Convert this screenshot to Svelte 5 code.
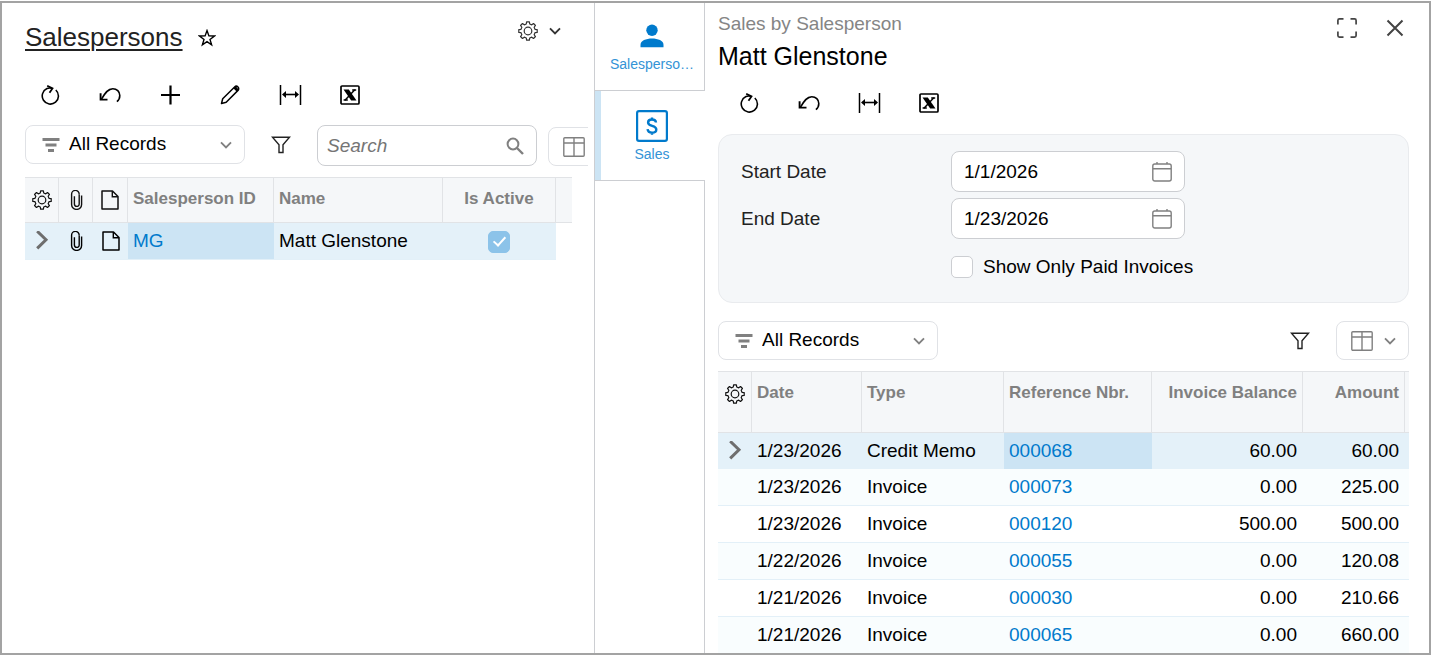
<!--
    Salespersons inquiry: record list on the left, a strip of side-panel tabs,
    and the Sales by Salesperson panel on the right.
-->
<script>
    let view = $state('All Records');
    let salesView = $state('All Records');
    let search = $state('');
    let startDate = $state('1/1/2026');
    let endDate = $state('1/23/2026');
    let onlyPaid = $state(false);
    let selected = $state(0);

    const sales = [
        { date: '1/23/2026', type: 'Credit Memo', ref: '000068', balance: '60.00', amount: '60.00' },
        { date: '1/23/2026', type: 'Invoice', ref: '000073', balance: '0.00', amount: '225.00' },
        { date: '1/23/2026', type: 'Invoice', ref: '000120', balance: '500.00', amount: '500.00' },
        { date: '1/22/2026', type: 'Invoice', ref: '000055', balance: '0.00', amount: '120.08' },
        { date: '1/21/2026', type: 'Invoice', ref: '000030', balance: '0.00', amount: '210.66' },
        { date: '1/21/2026', type: 'Invoice', ref: '000065', balance: '0.00', amount: '660.00' },
    ];

    // eight-tooth gear outline around (10, 10)
    function gearPath() {
        const pts = [];
        for (let i = 0; i < 8; i++) {
            const a = (i * Math.PI) / 4;
            for (const [r, d] of [[7.2, -0.24], [9.3, -0.15], [9.3, 0.15], [7.2, 0.24]]) {
                pts.push(`${(10 + r * Math.sin(a + d)).toFixed(2)} ${(10 - r * Math.cos(a + d)).toFixed(2)}`);
            }
        }
        return `M${pts.join('L')}Z`;
    }
    const gearOutline = gearPath();
</script>

{#snippet gear()}
    <svg class="icon" width="20" height="20" viewBox="0 0 20 20">
        <path d={gearOutline} stroke-width="1.2" stroke-linejoin="round" />
        <circle cx="10" cy="10" r="3.8" stroke-width="1.2" />
    </svg>
{/snippet}

{#snippet refresh()}
    <svg class="icon" width="20" height="20" viewBox="0 0 20 20">
        <path d="M15.8 5A8.1 8.1 0 1 1 7 3.600Q9 2.700 12 3.300" stroke-width="1.6" />
        <path d="M7.2.8 12.500 3.400 9.500 7.800" stroke-width="1.8" />
    </svg>
{/snippet}

{#snippet undo()}
    <svg class="icon" width="22" height="22" viewBox="0 0 22 22">
        <path d="M2.5 15.2C6 9 9 4.7 13.8 4.7c4 0 7 3 7 6.8 0 2.5-1 4.7-2.9 6.2" stroke-width="1.6" />
        <path d="M1.6 9.2v6.400h6.900" stroke-width="1.9" />
    </svg>
{/snippet}

{#snippet fit()}
    <svg class="icon" width="24" height="20" viewBox="0 0 24 20">
        <path d="M2.500 0v20M22.500 0v20" stroke-width="1.5" />
        <path d="M6 9.500h13" stroke-width="1.6" />
        <path class="solid" d="M4 9.500 8 6v7zM21 9.500 17 6v7z" />
    </svg>
{/snippet}

{#snippet excel()}
    <svg class="icon" width="20" height="20" viewBox="0 0 20 20">
        <rect x="1" y="1" width="18" height="18" rx="1" stroke-width="1.7" />
        <path class="solid" d="M3.500 4.500h5.300l7.700 11h-5.300z" />
        <path d="M14.800 4.800 5 15.200" stroke-width="1.5" />
        <path d="M12.200 4.900h4M3.600 15.100h4.200" stroke-width="1.5" />
    </svg>
{/snippet}

{#snippet funnel()}
    <svg class="icon" width="20" height="20" viewBox="0 0 20 20">
        <path d="M1.500 2.200h17L12 9.800v7.700H8V9.800z" stroke-width="1.4" />
    </svg>
{/snippet}

{#snippet lines()}
    <svg class="icon muted" width="18" height="16" viewBox="0 0 18 16">
        <path d="M.5 2.500h17M3.500 8h11M6 13.500h6" stroke-width="2.8" />
    </svg>
{/snippet}

{#snippet chevron()}
    <svg class="icon" width="12" height="8" viewBox="0 0 12 8">
        <path d="M1 1.300l5 5 5-5" stroke-width="1.9" />
    </svg>
{/snippet}

{#snippet columns()}
    <svg class="icon muted" width="22" height="20" viewBox="0 0 22 20">
        <rect x=".8" y=".8" width="20.4" height="18.4" rx="1" stroke-width="1.4" />
        <path d="M1 6h20M11 1v18" stroke-width="1.4" />
    </svg>
{/snippet}

{#snippet clip()}
    <svg class="icon" width="14" height="20" viewBox="0 0 14 20">
        <path d="M10.200 4.600v-.4a3.800 3.800 0 0 0-7.600 0v10.200a5 5 0 0 0 10 0V5.500" stroke-width="1.4" />
        <path d="M10.200 4.500v9.500a2.400 2.400 0 0 1-4.800 0V6.200" stroke-width="1.4" />
    </svg>
{/snippet}

{#snippet page()}
    <svg class="icon" width="18" height="20" viewBox="0 0 18 20">
        <path d="M1 1h10.500L17 6.500V19H1z" stroke-width="1.5" stroke-linejoin="round" />
        <path d="M11.300 1v5.700H17" stroke-width="1.4" />
    </svg>
{/snippet}

{#snippet pointer()}
    <svg class="icon pointer" width="14" height="20" viewBox="0 0 14 20">
        <path d="M2.200.200l8.800 8.600-8.800 8.600" stroke-width="3" />
    </svg>
{/snippet}

{#snippet calendar()}
    <svg class="icon muted" width="20" height="20" viewBox="0 0 20 20">
        <rect x=".8" y="2" width="18.4" height="17" rx="2" stroke-width="1.4" />
        <path d="M1 6.800h18M5 0v2M15 0v2" stroke-width="1.4" />
    </svg>
{/snippet}

<div class="frame">
    <section class="list-pane">
        <header class="list-head">
            <a class="title" href="#salespersons">Salespersons</a>
            <button class="plain star" type="button" aria-label="Add to favorites">
                <svg class="icon" width="18" height="18" viewBox="0 0 18 18">
                    <path d="M9 1.600l1.900 5.300 5.600.1-4.500 3.400 1.600 5.500L9 12.700l-4.600 3.200L6 10.400 1.500 7l5.600-.1z" stroke-width="1.4" />
                </svg>
            </button>
            <button class="plain settings" type="button" aria-label="Screen settings">
                {@render gear()}
                {@render chevron()}
            </button>
        </header>

        <div class="toolbar">
            <button class="tool" type="button" aria-label="Refresh">{@render refresh()}</button>
            <button class="tool" type="button" aria-label="Undo">{@render undo()}</button>
            <button class="tool" type="button" aria-label="Add">
                <svg class="icon" width="20" height="20" viewBox="0 0 20 20">
                    <path d="M10.500.500v19M1 10h19" stroke-width="2.2" />
                </svg>
            </button>
            <button class="tool" type="button" aria-label="Edit">
                <svg class="icon" width="20" height="20" viewBox="0 0 20 20">
                    <path d="M1.500 18.500l1.200-4.700L14.600 2a2.300 2.300 0 0 1 3.400 3.400L6.200 17.300z" stroke-width="1.5" stroke-linejoin="round" />
                    <path class="solid" d="M13.300 3.200l3.500 3.500 1.900-2.300-2.900-3.200z" />
                </svg>
            </button>
            <button class="tool" type="button" aria-label="Fit to screen">{@render fit()}</button>
            <button class="tool" type="button" aria-label="Export to Excel">{@render excel()}</button>
        </div>

        <div class="filters clipped">
            <label class="combo">
                {@render lines()}
                <select bind:value={view} aria-label="Filter">
                    <option>All Records</option>
                </select>
                {@render chevron()}
            </label>
            <button class="plain funnel" type="button" aria-label="Filter settings">{@render funnel()}</button>
            <label class="field search">
                <input type="text" placeholder="Search" aria-label="Search" bind:value={search} />
                <svg class="icon muted" width="18" height="18" viewBox="0 0 18 18">
                    <circle cx="7" cy="7" r="5.4" stroke-width="2" />
                    <path d="M11 11l6 6" stroke-width="2.4" />
                </svg>
            </label>
            <button class="columns" type="button" aria-label="Column view">
                {@render columns()}
                {@render chevron()}
            </button>
        </div>

        <table class="grid people">
            <colgroup>
                <col class="w-tool" />
                <col class="w-tool" />
                <col class="w-note" />
                <col class="w-id" />
                <col class="w-name" />
                <col class="w-active" />
                <col class="w-rest" />
            </colgroup>
            <thead>
                <tr>
                    <th class="mark">{@render gear()}</th>
                    <th class="mark">{@render clip()}</th>
                    <th class="mark">{@render page()}</th>
                    <th>Salesperson ID</th>
                    <th>Name</th>
                    <th class="center">Is Active</th>
                    <th class="rest"></th>
                </tr>
            </thead>
            <tbody>
                <tr class="current">
                    <td class="mark">{@render pointer()}</td>
                    <td class="mark">{@render clip()}</td>
                    <td class="mark">{@render page()}</td>
                    <td class="key"><a href="#MG">MG</a></td>
                    <td>Matt Glenstone</td>
                    <td class="center"><input type="checkbox" aria-label="Is Active" checked disabled /></td>
                    <td class="rest"></td>
                </tr>
            </tbody>
        </table>
    </section>

    <nav class="tabs">
        <button class="tab" type="button">
            <svg width="32" height="32" viewBox="0 0 32 32">
                <circle cx="16" cy="10.3" r="5.700" />
                <path d="M4.500 27.300v-2.400c0-4.100 5.500-6.300 11.500-6.300s11.500 2.200 11.500 6.300v2.400z" />
            </svg>
            <span>Salesperso…</span>
        </button>
        <button class="tab active" type="button">
            <svg width="32" height="32" viewBox="0 0 32 32">
                <path d="M3 0h26a3 3 0 0 1 3 3v26a3 3 0 0 1-3 3H3a3 3 0 0 1-3-3V3a3 3 0 0 1 3-3zM2.200 3v26q0 .8.8.8h26q.8 0 .8-.8V3q0-.8-.8-.8H3q-.8 0-.8.800z" fill-rule="evenodd" />
                <path class="dollar" d="M20 12.500c-.2-2-1.700-3-4-3s-3.900 1.100-3.900 3c0 4.600 8.200 2.300 8.200 7 0 2-1.700 3.200-4.200 3.200-2.600 0-4.300-1.200-4.500-3.500M16 7.500v2.500M16 22v2.800" />
            </svg>
            <span>Sales</span>
        </button>
        <div class="tab-rest"></div>
    </nav>

    <section class="sales-pane">
        <header class="sales-head">
            <div class="names">
                <p>Sales by Salesperson</p>
                <h2>Matt Glenstone</h2>
            </div>
            <button class="plain window" type="button" aria-label="Expand">
                <svg class="icon" width="20" height="20" viewBox="0 0 20 20">
                    <path d="M.9 6.500V2.400Q.9.900 2.400.9h4.100M13.500.9h4.100q1.500 0 1.500 1.500v4.100M19.100 13.500v4.100q0 1.500-1.500 1.500h-4.100M6.500 19.100H2.400q-1.500 0-1.500-1.500v-4.100" stroke-width="1.7" />
                </svg>
            </button>
            <button class="plain window" type="button" aria-label="Close">
                <svg class="icon" width="20" height="20" viewBox="0 0 20 20">
                    <path d="M2.500 2.500l15 15M17.500 2.500l-15 15" stroke-width="2" />
                </svg>
            </button>
        </header>

        <div class="toolbar">
            <button class="tool" type="button" aria-label="Refresh">{@render refresh()}</button>
            <button class="tool" type="button" aria-label="Undo">{@render undo()}</button>
            <button class="tool" type="button" aria-label="Fit to screen">{@render fit()}</button>
            <button class="tool" type="button" aria-label="Export to Excel">{@render excel()}</button>
        </div>

        <form class="params">
            <label for="start-date">Start Date</label>
            <div class="field">
                <input id="start-date" type="text" bind:value={startDate} />
                {@render calendar()}
            </div>
            <label for="end-date">End Date</label>
            <div class="field">
                <input id="end-date" type="text" bind:value={endDate} />
                {@render calendar()}
            </div>
            <label class="check">
                <input type="checkbox" bind:checked={onlyPaid} />
                Show Only Paid Invoices
            </label>
        </form>

        <div class="filters">
            <label class="combo">
                {@render lines()}
                <select bind:value={salesView} aria-label="Filter">
                    <option>All Records</option>
                </select>
                {@render chevron()}
            </label>
            <button class="plain funnel push" type="button" aria-label="Filter settings">{@render funnel()}</button>
            <button class="columns" type="button" aria-label="Column view">
                {@render columns()}
                {@render chevron()}
            </button>
        </div>

        <table class="grid sales">
            <colgroup>
                <col class="w-tool" />
                <col class="w-date" />
                <col class="w-type" />
                <col class="w-ref" />
                <col class="w-balance" />
                <col class="w-amount" />
                <col class="w-edge" />
            </colgroup>
            <thead>
                <tr>
                    <th class="mark">{@render gear()}</th>
                    <th>Date</th>
                    <th>Type</th>
                    <th>Reference Nbr.</th>
                    <th class="num">Invoice Balance</th>
                    <th class="num">Amount</th>
                    <th class="rest"></th>
                </tr>
            </thead>
            <tbody>
                {#each sales as row, i}
                    <tr class:current={i === selected} onclick={() => (selected = i)}>
                        <td class="mark">{#if i === selected}{@render pointer()}{/if}</td>
                        <td>{row.date}</td>
                        <td>{row.type}</td>
                        <td class="key"><a href="#{row.ref}">{row.ref}</a></td>
                        <td class="num">{row.balance}</td>
                        <td class="num">{row.amount}</td>
                        <td class="rest"></td>
                    </tr>
                {/each}
            </tbody>
        </table>
    </section>
</div>

<style>
    :global(body) {
        margin: 0;
        background: #fff;
    }

    .frame {
        --blue: #007acc;
        --line: #e1e3e6;
        --gray: #808080;

        display: grid;
        grid-template-columns: minmax(0, 592fr) 111px minmax(0, 724fr);
        box-sizing: border-box;
        height: calc(100vh - 1px);
        margin-top: 1px;
        border: 2px solid #a3a3a3;
        overflow: hidden;
        font-family: "Liberation Sans", Arial, sans-serif;
        font-size: 19px;
        line-height: 24px;
        color: #000;
    }

    button,
    input,
    select {
        box-sizing: border-box;
        margin: 0;
        font: inherit;
        color: inherit;
    }

    button {
        padding: 0;
        background: none;
        border: 0;
        cursor: pointer;
    }

    a {
        color: var(--blue);
        text-decoration: none;
    }

    .icon {
        display: block;
        flex: none;
        fill: none;
        stroke: currentColor;
    }

    .icon .solid {
        fill: currentColor;
        stroke: none;
    }

    .muted {
        color: var(--gray);
    }

    .plain {
        display: flex;
        align-items: center;
        justify-content: center;
    }

    /* Left pane */
    .list-pane {
        padding: 18px 6px 0 23px;
        overflow: hidden;
    }

    .list-head {
        display: flex;
        align-items: flex-start;
    }

    .title {
        font-size: 26px;
        line-height: 32px;
        color: #222;
        text-decoration: underline;
        text-decoration-thickness: 2px;
        text-underline-offset: 3px;
    }

    .star {
        height: 34px;
        margin-left: 15px;
    }

    .settings {
        gap: 11px;
        height: 20px;
        margin: 0 27px 0 auto;
        color: #333;
    }

    .toolbar {
        display: flex;
        gap: 20px;
        margin: 20px 0 0 5px;
    }

    .tool {
        display: flex;
        align-items: center;
        justify-content: center;
        width: 40px;
        height: 40px;
    }

    .filters {
        display: flex;
        align-items: flex-start;
        margin: 10px 0 11px;
    }

    .clipped {
        overflow: hidden;
    }

    .combo,
    .columns {
        display: flex;
        flex: none;
        align-items: center;
        box-sizing: border-box;
        height: 39px;
        background: #fff;
        border: 1px solid #e0e2e6;
        border-radius: 8px;
    }

    .combo {
        gap: 9px;
        width: 220px;
        padding: 0 12px 0 16px;
        color: var(--gray);
    }

    .combo select {
        flex: 1;
        min-width: 0;
        height: 37px;
        padding: 0 0 2px;
        color: #000;
        appearance: none;
        background: none;
        border: 0;
    }

    .columns {
        gap: 11px;
        width: 73px;
        padding: 0 12px 0 14px;
        color: var(--gray);
    }

    .funnel {
        flex: none;
        width: 40px;
        height: 39px;
        color: #222;
    }

    .clipped .funnel {
        margin: 0 16px;
    }

    .clipped .columns {
        align-self: flex-end;
        margin-left: 11px;
    }

    .field {
        display: flex;
        flex: none;
        align-items: center;
        box-sizing: border-box;
        height: 41px;
        padding: 0 12px;
        background: #fff;
        border: 1px solid #ccced2;
        border-radius: 8px;
    }

    .field input {
        flex: 1;
        min-width: 0;
        padding: 0;
        background: none;
        border: 0;
        outline: 0;
    }

    .search {
        width: 220px;
        padding-left: 9px;
    }

    .search input::placeholder {
        font-style: italic;
        color: #757575;
        opacity: 1;
    }

    /* Grids */
    .grid {
        width: 100%;
        table-layout: fixed;
        border-collapse: separate;
        border-spacing: 0;
    }

    .people {
        width: calc(100% - 16px);
    }

    .w-tool    { width: 34px; }
    .w-note    { width: 35px; }
    .w-id      { width: 146px; }
    .w-name    { width: 169px; }
    .w-active  { width: 113px; }
    .w-rest    { width: 16px; }
    .w-date    { width: 110px; }
    .w-type    { width: 142px; }
    .w-ref     { width: 148px; }
    .w-balance { width: 151px; }
    .w-amount  { width: 102px; }
    .w-edge    { width: 4px; }

    th,
    td {
        box-sizing: border-box;
        text-align: left;
        white-space: nowrap;
    }

    th {
        height: 46px;
        padding: 11px 5px 0;
        font-size: 17px;
        font-weight: 700;
        line-height: 20px;
        vertical-align: top;
        color: var(--gray);
        background: #f5f7f9;
        border: solid var(--line);
        border-width: 1px 1px 1px 0;
    }

    .sales th {
        height: 62px;
    }

    td {
        height: 37px;
        padding: 0 6px 0 5px;
        border-bottom: 1px solid #e3f0f8;
    }

    .center {
        text-align: center;
    }

    .num {
        text-align: right;
    }

    th.mark {
        padding: 12px 0 0;
        color: #111;
    }

    td.mark {
        padding: 0;
    }

    .mark .icon {
        margin: 0 auto;
    }

    .mark .pointer {
        color: #6e6e6e;
    }

    .rest {
        padding: 0;
    }

    th.rest {
        border-right: 0;
    }

    tbody tr:nth-child(even) {
        background: #f9fdfe;
    }

    .current td {
        background: #e4f1f9;
    }

    .current .key {
        background: #cce4f4;
    }

    .people .current .rest {
        background: none;
        border: 0;
    }

    .sales .current td {
        height: 36px;
        border: 0;
    }

    /* Checkboxes */
    input[type="checkbox"] {
        display: inline-grid;
        flex: none;
        place-items: center;
        width: 22px;
        height: 22px;
        vertical-align: middle;
        appearance: none;
        background: #fff;
        border: 1px solid #ccced2;
        border-radius: 5px;
    }

    input[type="checkbox"]:checked {
        background: #8cc3e9;
        border-color: #8cc3e9;
    }

    input[type="checkbox"]:checked::after {
        width: 5px;
        height: 10px;
        margin-bottom: 3px;
        content: "";
        border: solid #fff;
        border-width: 0 2px 2px 0;
        transform: rotate(42deg);
    }

    /* Side panel tabs */
    .tabs {
        display: flex;
        flex-direction: column;
        border-left: 1px solid #ccced2;
    }

    .tab {
        display: flex;
        flex-direction: column;
        gap: 2px;
        align-items: center;
        justify-content: flex-end;
        width: 100%;
        height: 90px;
        padding: 0 0 16px 5px;
        font-size: 14px;
        line-height: 20px;
        color: #3393d6;
        border: solid #ccced2;
        border-width: 0 1px 1px 0;
    }

    .tab:first-child {
        height: 88px;
    }

    .tab svg {
        fill: var(--blue);
    }

    .tab .dollar {
        fill: none;
        stroke: var(--blue);
        stroke-width: 2.4;
    }

    .tab.active {
        border-right: 0;
        padding-right: 1px;
        background: linear-gradient(90deg, #cce4f4 6px, transparent 6px);
    }

    .tab-rest {
        flex: 1;
        border-right: 1px solid #ccced2;
    }

    /* Right pane */
    .sales-pane {
        padding: 9px 20px 0 13px;
        overflow: hidden;
    }

    .sales-head {
        display: flex;
        align-items: flex-start;
    }

    .names {
        flex: 1;
    }

    .names p {
        margin: 0;
        color: #858585;
    }

    .names h2 {
        margin: 4px 0 0;
        font-size: 25px;
        font-weight: 400;
        line-height: 32px;
    }

    .window {
        width: 28px;
        height: 32px;
        margin-left: 20px;
        color: #444;
    }

    .sales-pane .toolbar {
        margin: 11px 0 11px 11px;
    }

    .params {
        display: grid;
        grid-template-columns: 210px 234px;
        gap: 6px 0;
        align-items: center;
        padding: 16px 22px 14px;
        background: #f5f7f9;
        border: 1px solid #e9ebee;
        border-radius: 14px;
    }

    .params > label {
        color: #222;
    }

    .params .check {
        display: flex;
        grid-column: 2;
        gap: 10px;
        align-items: center;
        height: 43px;
        white-space: nowrap;
        color: #000;
    }

    .sales-pane .filters {
        margin-top: 18px;
    }

    .push {
        margin: 0 16px 0 auto;
    }
</style>
